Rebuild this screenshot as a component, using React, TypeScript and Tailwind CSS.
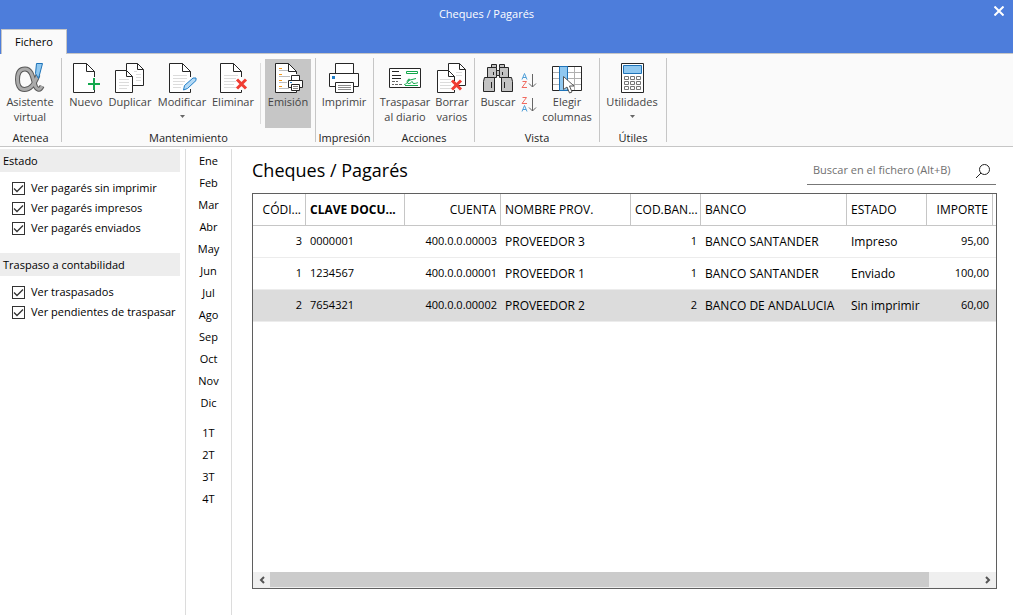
import type { JSX, ReactNode } from "react";

type IconProps = { children: ReactNode };

function Icon({ children }: IconProps): JSX.Element {
  return (
    <svg
      className="h-8 w-8 shrink-0"
      viewBox="0 0 32 32"
      fill="none"
      stroke="#262626"
      aria-hidden="true"
    >
      {children}
    </svg>
  );
}

function AlphaIcon() {
  const ribbon =
    "M24 13C20 24 16 27.500 10.500 27.500C5 27.500 3.500 22 3.500 17.500C3.500 11 6 7 11 7C17 7 18.500 14 20.500 21.500C22 28 26 29 28 24";
  return (
    <Icon>
      <path d={ribbon} stroke="#595959" strokeWidth="5" />
      <path d={ribbon} stroke="#ababab" strokeWidth="3" />
      <path d="M22.500 1.500h6l-4 15-3-5z" fill="#90c8f0" stroke="#1e73b8" />
    </Icon>
  );
}

function NewIcon() {
  return (
    <Icon>
      <path d="M24.500 15V9.500l-8-8H3.500v29h21V28" fill="#fff" />
      <path d="M16.500 1.500v8h8" />
      <path d="M24 16v12M18 22h12" stroke="#12a84c" strokeWidth="2" />
    </Icon>
  );
}

function DuplicateIcon() {
  return (
    <Icon>
      <path d="M12.500 1.500h11l6 6v16h-17z" fill="#fff" />
      <path d="M23.500 1.500v6h6" />
      <path d="M20 9.500h3M22 12.500h5M22 15.500h5M22 18.500h5" stroke="#dcdcdc" />
      <path d="M1.500 8.500h11l6 6v16h-17z" fill="#fff" />
      <path d="M12.500 8.500v6h6" />
      <path
        d="M5 17.500h10M5 20.500h10M5 23.500h10M5 26.500h8"
        stroke="#dcdcdc"
      />
    </Icon>
  );
}

function EditIcon() {
  return (
    <Icon>
      <path d="M24.500 15V9.500l-8-8H3.500v29h21V27" fill="#fff" />
      <path d="M16.500 1.500v8h8" />
      <path
        d="M7 13.500h14M7 16.500h14M7 19.500h12M7 22.500h10M7 25.500h8"
        stroke="#dcdcdc"
      />
      <path
        d="M17.500 28l1-4.500 8.500-7.500h3v2.500l-8.500 8z"
        fill="#b4d9f5"
        stroke="#1f7ec8"
      />
    </Icon>
  );
}

function DeleteIcon() {
  return (
    <Icon>
      <path d="M24.500 15V9.500l-8-8H3.500v29h21V28" fill="#fff" />
      <path d="M16.500 1.500v8h8" />
      <path
        d="M7 13.500h14M7 16.500h12M7 19.500h12M7 22.500h10M7 25.500h12"
        stroke="#dcdcdc"
      />
      <path d="M20 17.500l9 9M29 17.500l-9 9" stroke="#f03c32" strokeWidth="3" />
    </Icon>
  );
}

function EmissionIcon() {
  return (
    <Icon>
      <path d="M24.500 12V9.500l-8-8H3.500v29h21V28" fill="#fff" />
      <path d="M16.500 1.500v8h8" />
      <path d="M7 8.500h9M7 14.500h11M7 20.500h8M7 26.500h10" stroke="#bdbdbd" />
      <path d="M7 6.500h3M7 12.500h3M7 18.500h3M7 24.500h3" stroke="#f29a1f" />
      <path d="M19.500 13.500h8v5h-8z" fill="#fff" />
      <path d="M16.500 18.500h14v7h-14z" fill="#fff" />
      <path d="M19.500 22.500h8v6h-8z" fill="#fff" />
      <path d="M21 24.500h5M21 26.500h5" stroke="#808080" />
      <path d="M18 20.500h2" stroke="#1f7ec8" />
    </Icon>
  );
}

function PrintIcon() {
  return (
    <Icon>
      <path d="M7.500 1.500h18v10h-18z" fill="#fff" />
      <path d="M1.500 11.500h29v13h-29z" fill="#fff" />
      <path d="M7.500 20.500h18v10h-18z" fill="#fff" />
      <path d="M10 23.500h13M10 25.500h13M10 27.500h13" stroke="#8c8c8c" />
      <path d="M4 14h3v3H4z" fill="#1f7ec8" stroke="none" />
    </Icon>
  );
}

function CheckIcon() {
  return (
    <Icon>
      <path d="M.5 6.500h31v19H.500z" fill="#fff" />
      <path d="M3 9.500h7M3 13.500h9M3 16.500h9" />
      <path d="M3 19.500h3M7 19.500h2M3 22.500h2M6 22.500h3M10 22.500h3" stroke="#666" />
      <path d="M17.500 9.500h11v2h-11z" stroke="#12a84c" />
      <path
        d="M15 22.500c3 0 7-6 5-5.500s-3 5 0 4.500 2-2 3-2 0 2 2 2 4-1 4-1M16 23.500h13M19 18.500l8-2"
        stroke="#12a84c"
      />
    </Icon>
  );
}

function DeleteManyIcon() {
  return (
    <Icon>
      <path d="M12.500 1.500h11l6 6v16h-17z" fill="#fff" />
      <path d="M23.500 1.500v6h6" />
      <path d="M20 10.500h6M20 13.500h6" stroke="#dcdcdc" />
      <path d="M18.500 19v-4.500l-6-6h-11v22h17V28" fill="#fff" />
      <path d="M12.500 8.500v6h6" />
      <path
        d="M4 17.500h11M4 20.500h11M4 23.500h11M4 26.500h11"
        stroke="#dcdcdc"
      />
      <path d="M16 18.500l9 9M25 18.500l-9 9" stroke="#f03c32" strokeWidth="3" />
    </Icon>
  );
}

function BinocularsIcon() {
  return (
    <Icon>
      <g fill="#c3c3c3">
        <path d="M9.500 2.500h5v3h-5zM17.500 2.500h5v3h-5z" />
        <path d="M5.500 5.500h9v10h-9zM17.500 5.500h9v10h-9z" />
        <path d="M14.500 8.500h3v5h-3z" />
        <path d="M2.500 15.500h10v14h-11v-10zM19.500 15.500h10l1 4v10h-11z" />
      </g>
      <path d="M11.500 10v3M20.500 10v3M9.500 20v6M22.500 20v6" />
    </Icon>
  );
}

function ColumnsIcon() {
  return (
    <Icon>
      <path d="M1.500 4.500h29v24h-29z" fill="#fff" />
      <path d="M2 10.500h28M2 16.500h28M2 22.500h28M16.500 5v23M23.500 5v23" stroke="#b0b0b0" />
      <path d="M8.500 4.500h8v24h-8z" fill="#90c8f0" stroke="#1e73b8" />
      <path
        d="M12.500 14.500v13l3.500-2.500 2.500 6 2.500-1-2.500-6h4.500z"
        fill="#fff"
        stroke="#555"
      />
    </Icon>
  );
}

function CalculatorIcon() {
  return (
    <Icon>
      <path d="M5.500 1.500h22v29h-22z" fill="#fff" />
      <path d="M7.500 3.500h18v8h-18z" fill="#90c8f0" stroke="#1e73b8" />
      <path
        d="M8.500 14.500h4v3h-4zM14.500 14.500h4v3h-4zM20.500 14.500h4v3h-4zM8.500 19.500h4v3h-4zM14.500 19.500h4v3h-4zM20.500 19.500h4v3h-4zM8.500 24.500h4v3h-4zM14.500 24.500h4v3h-4zM20.500 24.500h4v3h-4z"
        stroke="#777"
      />
    </Icon>
  );
}

function SortIcon({ descending = false }: { descending?: boolean }) {
  const letterA = "M1 6.500L3.500 .5 6 6.500M2 4.500h3";
  const letterZ = "M1.500 .5h4L1 6.500h5";
  return (
    <svg className="h-4 w-4" viewBox="0 0 16 16" fill="none" aria-hidden="true">
      <path d={descending ? letterZ : letterA} stroke={descending ? "#f06a60" : "#4f9fd8"} />
      <g transform="translate(0 8)">
        <path d={descending ? letterA : letterZ} stroke={descending ? "#4f9fd8" : "#f06a60"} />
      </g>
      <path d="M11.500 1v13M8 10.500l3.500 3.500 3.500-3.500" stroke="#666" />
    </svg>
  );
}

type ToolButtonProps = {
  label: ReactNode;
  icon: ReactNode;
  className: string;
  menu?: boolean;
};

function ToolButton({ label, icon, className, menu = false }: ToolButtonProps): JSX.Element {
  return (
    <button
      type="button"
      className={`flex h-[69px] flex-col items-center pt-[3px] text-[11px] leading-[15px] whitespace-nowrap text-[#444] ${className}`}
    >
      {icon}
      <span>{label}</span>
      {menu && (
        <svg className="mt-[6px] h-[3px] w-[5px]" viewBox="0 0 5 3" aria-hidden="true">
          <path d="M0 0h5L2.500 3z" fill="#666" />
        </svg>
      )}
    </button>
  );
}

type GroupProps = { title: string; className: string; children: ReactNode };

function Group({ title, className, children }: GroupProps): JSX.Element {
  return (
    <section
      className={`flex h-[84px] shrink-0 flex-col border-r border-[#c6c6c6] pt-px ${className}`}
    >
      <div className="flex">{children}</div>
      <h2 className="mt-[2px] text-center text-[11px] leading-[15px] whitespace-nowrap text-[#222]">
        {title}
      </h2>
    </section>
  );
}

function Filter({ label }: { label: string }): JSX.Element {
  return (
    <label className="flex h-5 items-center gap-[6px] pl-3 text-[11px] whitespace-nowrap">
      <span className="relative h-[13px] w-[13px] shrink-0">
        <input
          type="checkbox"
          defaultChecked
          className="peer block h-[13px] w-[13px] appearance-none border border-[#333] bg-white"
        />
        <svg
          className="pointer-events-none absolute inset-0 hidden peer-checked:block"
          viewBox="0 0 13 13"
          fill="none"
          aria-hidden="true"
        >
          <path d="M2 6.500l3 3 6-6" stroke="#333" strokeWidth="1.300" />
        </svg>
      </span>
      {label}
    </label>
  );
}

function FilterGroup({ title, filters }: { title: string; filters: string[] }): JSX.Element {
  return (
    <section>
      <h2 className="mr-[5px] bg-[#ededed] pl-[3px] text-[11px] leading-[23px]">{title}</h2>
      <div className="pt-[6px] pb-px">
        {filters.map((filter) => (
          <Filter key={filter} label={filter} />
        ))}
      </div>
    </section>
  );
}

function Periods({ items }: { items: string[] }): JSX.Element {
  return (
    <div className="flex flex-col">
      {items.map((item) => (
        <button key={item} type="button" className="h-[22px] text-[11px]">
          {item}
        </button>
      ))}
    </div>
  );
}

const months = ["Ene", "Feb", "Mar", "Abr", "May", "Jun", "Jul", "Ago", "Sep", "Oct", "Nov", "Dic"];
const quarters = ["1T", "2T", "3T", "4T"];

const columns = [
  { title: "CÓDI...", className: "w-[53px] text-right font-normal" },
  { title: "CLAVE DOCU...", className: "w-[99px] text-left font-bold" },
  { title: "CUENTA", className: "w-[96px] text-right font-normal" },
  { title: "NOMBRE PROV.", className: "w-[130px] text-left font-normal" },
  { title: "COD.BAN...", className: "w-[70px] text-right font-normal" },
  { title: "BANCO", className: "w-[146px] text-left font-normal" },
  { title: "ESTADO", className: "w-[80px] text-left font-normal" },
  { title: "IMPORTE", className: "w-[66px] text-right font-normal" },
];

const cellStyles = [
  "text-right text-[11px]",
  "text-left text-[11px]",
  "text-right text-[11px]",
  "text-left",
  "text-right text-[11px]",
  "text-left",
  "text-left",
  "text-right text-[11px]",
];

const rows = [
  ["3", "0000001", "400.0.0.00003", "PROVEEDOR 3", "1", "BANCO SANTANDER", "Impreso", "95,00"],
  ["1", "1234567", "400.0.0.00001", "PROVEEDOR 1", "1", "BANCO SANTANDER", "Enviado", "100,00"],
  ["2", "7654321", "400.0.0.00002", "PROVEEDOR 2", "2", "BANCO DE ANDALUCIA", "Sin imprimir", "60,00"],
];

const selectedRow = 2;

function ChequesTable(): JSX.Element {
  return (
    <table className="w-full table-fixed border-separate border-spacing-0 text-xs whitespace-nowrap">
      <thead>
        <tr className="h-8">
          {columns.map((column) => (
            <th
              key={column.title}
              scope="col"
              className={`border-r border-b border-[#c6c6c6] px-1 py-0 ${column.className}`}
            >
              {column.title}
            </th>
          ))}
          <td className="border-b border-[#c6c6c6]" />
        </tr>
      </thead>
      <tbody>
        {rows.map((row, index) => (
          <tr key={row[0]} className={`h-8 ${index === selectedRow ? "bg-[#dcdcdc]" : ""}`}>
            {row.map((value, column) => (
              <td
                key={columns[column].title}
                className={`border-b border-[#ececec] px-1 py-0 ${cellStyles[column]}`}
              >
                {value}
              </td>
            ))}
            <td className="border-b border-[#ececec]" />
          </tr>
        ))}
      </tbody>
    </table>
  );
}

function ScrollBar(): JSX.Element {
  return (
    <div className="flex h-4 bg-[#efefef] pb-px">
      <button type="button" aria-label="Desplazar a la izquierda" className="flex w-[17px] items-center justify-center">
        <svg className="h-2 w-2" viewBox="0 0 8 8" fill="none" aria-hidden="true">
          <path d="M6 1L3 4l3 3" stroke="#555" strokeWidth="2" />
        </svg>
      </button>
      <div className="flex-1">
        <div className="h-full w-[93%] bg-[#cbcbcb]" />
      </div>
      <button type="button" aria-label="Desplazar a la derecha" className="flex w-[17px] items-center justify-center">
        <svg className="h-2 w-2" viewBox="0 0 8 8" fill="none" aria-hidden="true">
          <path d="M2 1l3 3-3 3" stroke="#555" strokeWidth="2" />
        </svg>
      </button>
    </div>
  );
}

export default function App(): JSX.Element {
  return (
    <div className="flex min-h-screen flex-col bg-white font-['Open_Sans','Noto_Sans',sans-serif] text-black">
      <header className="bg-[#4d7ddb]">
        <div className="flex h-[29px] items-center">
          <h1 className="flex-1 pr-3 text-center text-[11px] text-white">Cheques / Pagarés</h1>
          <button type="button" aria-label="Cerrar" className="flex h-[22px] w-7 items-center justify-center self-start">
            <svg className="h-[10px] w-[10px]" viewBox="0 0 10 10" aria-hidden="true">
              <path d="M.5 .5l9 9M9.500 .5l-9 9" stroke="#fff" strokeWidth="2" />
            </svg>
          </button>
        </div>
        <div className="flex pl-px">
          <button
            type="button"
            className="h-[25px] w-[66px] border-t border-r border-l border-[#c6c6c6] bg-[#fafafa] text-[11px]"
          >
            Fichero
          </button>
          <div className="flex-1 border-b border-[#c6c6c6]" />
        </div>
      </header>

      <div className="flex border-b border-[#c6c6c6] bg-[#fafafa] pt-1 pb-1">
        <Group title="Atenea" className="w-[62px]">
          <ToolButton
            className="w-[60px]"
            icon={<AlphaIcon />}
            label={<>Asistente<br />virtual</>}
          />
        </Group>
        <Group title="Mantenimiento" className="w-[254px]">
          <ToolButton className="ml-1 w-10" icon={<NewIcon />} label="Nuevo" />
          <ToolButton className="w-12" icon={<DuplicateIcon />} label="Duplicar" />
          <ToolButton className="w-14" icon={<EditIcon />} label="Modificar" menu />
          <ToolButton className="w-[46px]" icon={<DeleteIcon />} label="Eliminar" />
          <div className="mx-1 my-1 border-l border-[#dcdcdc]" />
          <ToolButton className="w-[46px] bg-[#c6c6c6]" icon={<EmissionIcon />} label="Emisión" />
        </Group>
        <Group title="Impresión" className="w-[58px]">
          <ToolButton className="w-14" icon={<PrintIcon />} label="Imprimir" />
        </Group>
        <Group title="Acciones" className="w-[101px]">
          <ToolButton
            className="ml-1 w-[54px]"
            icon={<CheckIcon />}
            label={<>Traspasar<br />al diario</>}
          />
          <ToolButton
            className="w-10"
            icon={<DeleteManyIcon />}
            label={<>Borrar<br />varios</>}
          />
        </Group>
        <Group title="Vista" className="w-[125px]">
          <ToolButton className="w-[46px]" icon={<BinocularsIcon />} label="Buscar" />
          <div className="flex flex-col gap-2 pt-[14px]">
            <button type="button" aria-label="Orden ascendente">
              <SortIcon />
            </button>
            <button type="button" aria-label="Orden descendente">
              <SortIcon descending />
            </button>
          </div>
          <ToolButton
            className="ml-1 w-[52px]"
            icon={<ColumnsIcon />}
            label={<>Elegir<br />columnas</>}
          />
        </Group>
        <Group title="Útiles" className="w-[67px]">
          <ToolButton className="w-16" icon={<CalculatorIcon />} label="Utilidades" menu />
        </Group>
      </div>

      <div className="flex flex-1 pt-[2px]">
        <aside className="flex w-[186px] shrink-0 flex-col gap-[14px] border-r border-[#dcdcdc]">
          <FilterGroup
            title="Estado"
            filters={["Ver pagarés sin imprimir", "Ver pagarés impresos", "Ver pagarés enviados"]}
          />
          <FilterGroup
            title="Traspaso a contabilidad"
            filters={["Ver traspasados", "Ver pendientes de traspasar"]}
          />
        </aside>
        <nav
          aria-label="Periodo"
          className="flex w-[46px] shrink-0 flex-col gap-2 border-r border-[#dcdcdc] pt-px"
        >
          <Periods items={months} />
          <Periods items={quarters} />
        </nav>
        <main className="flex min-w-0 flex-1 flex-col pt-2 pr-4 pb-[26px] pl-5">
          <div className="mb-2 flex items-start justify-between">
            <h2 className="text-lg leading-[26px]">Cheques / Pagarés</h2>
            <div className="mr-px flex h-7 w-[189px] items-center border-b border-[#777] pr-[5px] pl-[6px]">
              <input
                type="search"
                aria-label="Buscar en el fichero"
                placeholder="Buscar en el fichero (Alt+B)"
                className="min-w-0 flex-1 text-[11px] outline-none placeholder:text-[#707070]"
              />
              <svg className="h-4 w-4" viewBox="0 0 16 16" fill="none" stroke="#222" aria-hidden="true">
                <circle cx="9.500" cy="6.500" r="5" />
                <path d="M6 10l-5 5" />
              </svg>
            </div>
          </div>
          <div className="flex flex-1 flex-col border border-[#5f5f5f]">
            <div className="flex-1 overflow-hidden">
              <ChequesTable />
            </div>
            <ScrollBar />
          </div>
        </main>
      </div>
    </div>
  );
}
